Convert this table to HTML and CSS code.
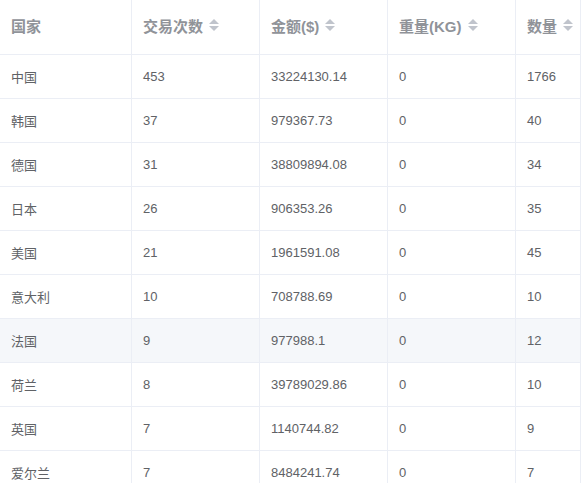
FILE: index.html
```html
<!DOCTYPE html>
<html>
<head>
<meta charset="utf-8">
<link rel="stylesheet" href="styles.css">
</head>
<body>
<div class="table">
  <div class="row head">
    <div class="cell">国家</div>
    <div class="cell">交易次数<span class="sort"><i class="up"></i><i class="down"></i></span></div>
    <div class="cell">金额($)<span class="sort"><i class="up"></i><i class="down"></i></span></div>
    <div class="cell">重量(KG)<span class="sort"><i class="up"></i><i class="down"></i></span></div>
    <div class="cell">数量<span class="sort"><i class="up"></i><i class="down"></i></span></div>
  </div>
  <div class="row"><div class="cell">中国</div><div class="cell">453</div><div class="cell">33224130.14</div><div class="cell">0</div><div class="cell">1766</div></div>
  <div class="row"><div class="cell">韩国</div><div class="cell">37</div><div class="cell">979367.73</div><div class="cell">0</div><div class="cell">40</div></div>
  <div class="row"><div class="cell">德国</div><div class="cell">31</div><div class="cell">38809894.08</div><div class="cell">0</div><div class="cell">34</div></div>
  <div class="row"><div class="cell">日本</div><div class="cell">26</div><div class="cell">906353.26</div><div class="cell">0</div><div class="cell">35</div></div>
  <div class="row"><div class="cell">美国</div><div class="cell">21</div><div class="cell">1961591.08</div><div class="cell">0</div><div class="cell">45</div></div>
  <div class="row"><div class="cell">意大利</div><div class="cell">10</div><div class="cell">708788.69</div><div class="cell">0</div><div class="cell">10</div></div>
  <div class="row hover"><div class="cell">法国</div><div class="cell">9</div><div class="cell">977988.1</div><div class="cell">0</div><div class="cell">12</div></div>
  <div class="row"><div class="cell">荷兰</div><div class="cell">8</div><div class="cell">39789029.86</div><div class="cell">0</div><div class="cell">10</div></div>
  <div class="row"><div class="cell">英国</div><div class="cell">7</div><div class="cell">1140744.82</div><div class="cell">0</div><div class="cell">9</div></div>
  <div class="row"><div class="cell">爱尔兰</div><div class="cell">7</div><div class="cell">8484241.74</div><div class="cell">0</div><div class="cell">7</div></div>
</div>
</body>
</html>
```
FILE: styles.css
```css
html, body {
  margin: 0;
  padding: 0;
  background: #fff;
  overflow: hidden;
}
body {
  font-family: "Liberation Sans", Arial, "Noto Sans CJK SC", sans-serif;
  font-size: 13px;
  color: #606266;
}
.table {
  width: 581px;
  overflow: hidden;
}
.row {
  display: grid;
  grid-template-columns: 132px 128px 128px 128px 1fr;
  height: 44px;
  box-sizing: border-box;
  border-bottom: 1px solid #ebeef5;
}
.row.head {
  height: 55px;
  color: #909399;
  font-weight: bold;
  font-size: 15px;
}
.row.hover {
  background: #f5f7fa;
}
.cell {
  display: flex;
  align-items: center;
  padding-left: 11px;
  padding-bottom: 1px;
  border-right: 1px solid #ebeef5;
  white-space: nowrap;
  box-sizing: border-box;
}
.head .cell {
  padding-bottom: 4px;
}
.sort {
  display: inline-flex;
  flex-direction: column;
  align-items: center;
  gap: 2px;
  margin-left: 6px;
}
.sort i {
  display: block;
  width: 0;
  height: 0;
  border-left: 5px solid transparent;
  border-right: 5px solid transparent;
}
.sort .up {
  border-bottom: 5px solid #c0c4cc;
}
.sort .down {
  border-top: 5px solid #c0c4cc;
}
```
